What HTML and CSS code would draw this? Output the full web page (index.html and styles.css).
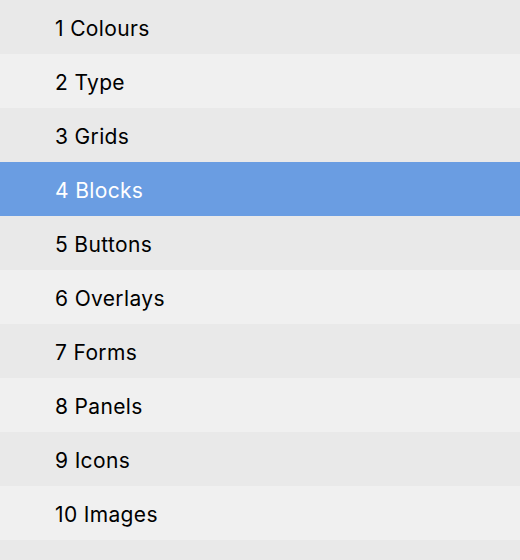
FILE: index.html
```html
<!DOCTYPE html>
<html>
<head>
<meta charset="utf-8">
<link rel="stylesheet" href="styles.css">
</head>
<body>
<ul class="list">
  <li class="row">1 Colours</li>
  <li class="row">2 Type</li>
  <li class="row">3 Grids</li>
  <li class="row selected">4 Blocks</li>
  <li class="row">5 Buttons</li>
  <li class="row">6 Overlays</li>
  <li class="row">7 Forms</li>
  <li class="row">8 Panels</li>
  <li class="row">9 Icons</li>
  <li class="row">10 Images</li>
  <li class="row last"></li>
</ul>
</body>
</html>
```
FILE: styles.css
```css
html, body {
  margin: 0;
  padding: 0;
  background: #e9e9e9;
}
.list {
  list-style: none;
  margin: 0;
  padding: 0;
}
.row {
  height: 54px;
  display: flex;
  align-items: center;
  padding-left: 55px;
  padding-top: 2px;
  font-family: Inter, "Liberation Sans", sans-serif;
  font-size: 21px;
  letter-spacing: 0.35px;
  color: #000;
  background: #e9e9e9;
  box-sizing: border-box;
}
.row:nth-child(even) {
  background: #f0f0f0;
}
.row.selected {
  background: #6a9de2;
  color: #fff;
}
.row.last {
  height: 20px;
}
```
